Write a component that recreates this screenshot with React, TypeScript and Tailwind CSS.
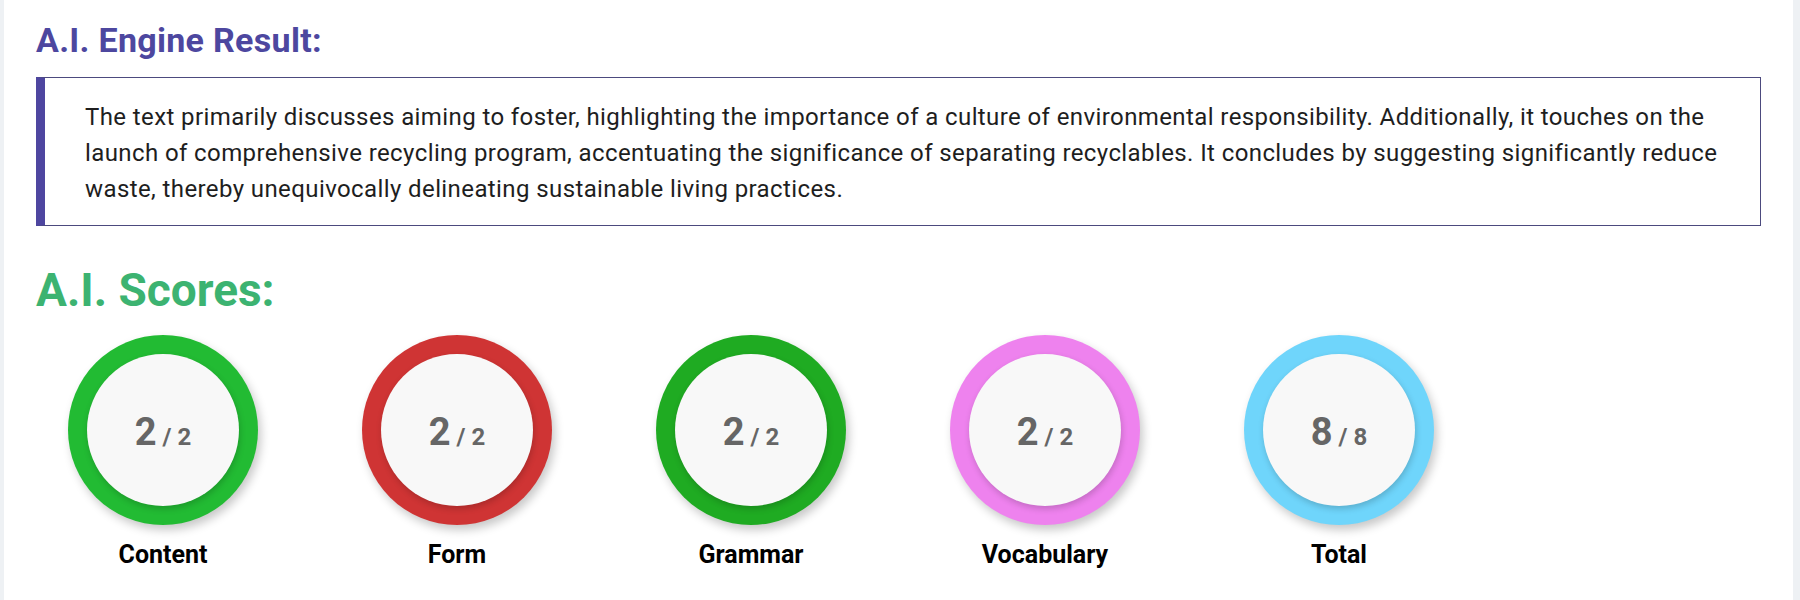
import React from 'react';

type Score = {
  label: string;
  value: number;
  max: number;
  ring: string;
};

const scores: Score[] = [
  { label: 'Content', value: 2, max: 2, ring: 'bg-[#22bb33]' },
  { label: 'Form', value: 2, max: 2, ring: 'bg-[#cf3434]' },
  { label: 'Grammar', value: 2, max: 2, ring: 'bg-[#1fab22]' },
  { label: 'Vocabulary', value: 2, max: 2, ring: 'bg-[#ee82ee]' },
  { label: 'Total', value: 8, max: 8, ring: 'bg-[#6fd5fb]' },
];

const ScoreCircle: React.FC<{ score: Score }> = ({ score }) => {
  return (
    <div className="flex flex-col items-center w-[190px]">
      <div
        className={`${score.ring} w-[190px] h-[190px] rounded-full flex items-center justify-center shadow-[3px_5px_10px_rgba(0,0,0,0.22)]`}
      >
        <div className="w-[152px] h-[152px] rounded-full bg-[#f8f8f8] flex items-center justify-center shadow-[1px_3px_6px_rgba(0,0,0,0.18)]">
          <div className="flex items-baseline pt-[3px] text-[#666666] font-bold leading-none">
            <span className="text-[38px]">{score.value}</span>
            <span className="text-[24px] ml-[6px]">/ {score.max}</span>
          </div>
        </div>
      </div>
      <p className="mt-[16px] text-[25px] leading-[28px] font-bold text-black">{score.label}</p>
    </div>
  );
};

export default function App() {
  return (
    <div className="min-h-[600px] bg-[#eef1f4] pl-[4px] pr-[7px] font-['Roboto',sans-serif]">
      <div className="bg-white min-h-[600px] pl-[32px] pr-[32px] pt-[20px]">
        <h2 className="text-[34px] leading-[40px] tracking-[0.3px] font-bold text-[#4d479f]">A.I. Engine Result:</h2>

        <div className="mt-[17px] border border-[#4c4a7e] border-l-[9px] border-l-[#4e46a0] pl-[40px] pr-[40px] pt-[21px] pb-[18px]">
          <p className="text-[24px] leading-[36px] tracking-[0.4px] text-[#1e1e1e]">
            The text primarily discusses aiming to foster, highlighting the importance of a culture of environmental
            responsibility. Additionally, it touches on the launch of comprehensive recycling program, accentuating the
            significance of separating recyclables. It concludes by suggesting significantly reduce waste, thereby
            unequivocally delineating sustainable living practices.
          </p>
        </div>

        <h2 className="mt-[38px] text-[46px] leading-[52px] font-bold text-[#3cb371]">A.I. Scores:</h2>

        <div className="mt-[19px] flex pl-[32px] gap-[104px]">
          {scores.map((s) => (
            <ScoreCircle key={s.label} score={s} />
          ))}
        </div>
      </div>
    </div>
  );
}
